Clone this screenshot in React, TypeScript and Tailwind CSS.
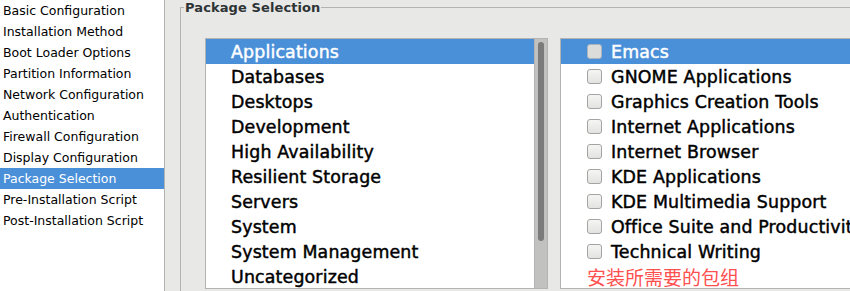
import { FC } from "react"

const steps = [
  "Basic Configuration",
  "Installation Method",
  "Boot Loader Options",
  "Partition Information",
  "Network Configuration",
  "Authentication",
  "Firewall Configuration",
  "Display Configuration",
  "Package Selection",
  "Pre-Installation Script",
  "Post-Installation Script",
]

const groups = [
  "Applications",
  "Databases",
  "Desktops",
  "Development",
  "High Availability",
  "Resilient Storage",
  "Servers",
  "System",
  "System Management",
  "Uncategorized",
]

const packages = [
  "Emacs",
  "GNOME Applications",
  "Graphics Creation Tools",
  "Internet Applications",
  "Internet Browser",
  "KDE Applications",
  "KDE Multimedia Support",
  "Office Suite and Productivity",
  "Technical Writing",
]

const Checkbox: FC<{ active: boolean }> = ({ active }) => (
  <span
    className={`w-[15px] h-[15px] shrink-0 rounded-[3px] border ${active ? "border-[#a9b3bd] bg-[#dcdcdb]" : "border-[#a3a3a1] bg-gradient-to-b from-[#f5f5f4] to-[#e3e3e1]"}`}
  />
)

const App: FC = (): JSX.Element => {
  return (
    <div className="w-[850px] h-[291px] flex overflow-hidden bg-[#e8e8e7] font-['DejaVu_Sans',sans-serif]">
      <div className="w-[165px] shrink-0 bg-white border-r border-[#b3b3b1]">
        {steps.map((s, i) => (
          <div
            key={s}
            className={`h-[21px] leading-[21px] pl-[3px] text-[12.5px] whitespace-nowrap ${i === 8 ? "bg-[#4a90d9] text-white" : "text-black"}`}
          >
            {s}
          </div>
        ))}
      </div>

      <div className="flex-1 min-w-0 pl-[15px]">
        <fieldset className="border-l border-t border-[#b3b3b1] h-[320px] m-0 p-0 min-w-0">
          <legend className="ml-[3px] px-[1px] text-[13px] leading-[15px] font-bold text-[#2e3436] tracking-[0.1px]">
            Package Selection
          </legend>
          <div className="flex gap-[12px] pl-[24px] pt-[23px]">
            <div className="w-[343px] h-[251px] shrink-0 flex bg-white border border-[#b3b3b1]">
              <div className="flex-1">
                {groups.map((g, i) => (
                  <div
                    key={g}
                    className={`h-[25px] leading-[26px] pl-[25px] text-[17.4px] tracking-[0.15px] [-webkit-text-stroke:0.45px_currentColor] whitespace-nowrap ${i === 0 ? "bg-[#4a90d9] text-white" : "text-black"}`}
                  >
                    {g}
                  </div>
                ))}
              </div>
              <div className="w-[13px] border-l border-[#b3b3b1] bg-[#c1c2c0] pl-[3px] pt-[3px]">
                <div className="w-[6px] h-[199px] rounded-full bg-[#7b7b7b]" />
              </div>
            </div>

            <div className="w-[320px] h-[251px] shrink-0 bg-white border border-[#b3b3b1] overflow-hidden">
              {packages.map((p, i) => (
                <div
                  key={p}
                  className={`h-[25px] flex items-center gap-[9px] pl-[26px] text-[17.4px] tracking-[0.15px] [-webkit-text-stroke:0.45px_currentColor] whitespace-nowrap ${i === 0 ? "bg-[#4a90d9] text-white" : "text-black"}`}
                >
                  <Checkbox active={i === 0} />
                  <span className="leading-[26px]">{p}</span>
                </div>
              ))}
              <div className="h-[25px] leading-[26px] pl-[26px] text-[19px] text-[#ff5050] font-['Noto_Sans_CJK_SC',sans-serif]">
                安装所需要的包组
              </div>
            </div>
          </div>
        </fieldset>
      </div>
    </div>
  )
}

export default App
